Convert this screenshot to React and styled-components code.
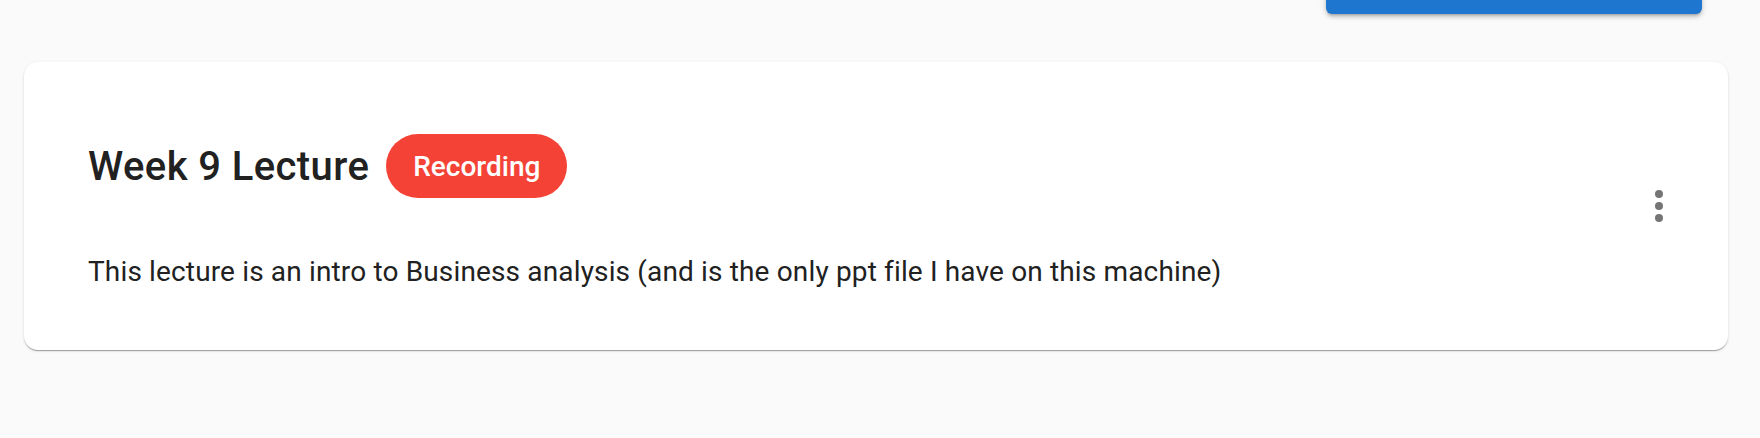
import React from 'react';
import styled, { createGlobalStyle } from 'styled-components';

const GlobalStyle = createGlobalStyle`
  html, body {
    margin: 0;
    padding: 0;
    background: #fafafa;
    font-family: Roboto, "Liberation Sans", Arial, sans-serif;
    overflow: hidden;
  }
`;

const Page = styled.div`
  width: 1760px;
  height: 438px;
  box-sizing: border-box;
  padding: 0 32px 0 24px;
`;

const Toolbar = styled.div`
  display: flex;
  justify-content: flex-end;
  padding-right: 26px;
  margin-top: -42px;
`;

const PrimaryButton = styled.button`
  width: 376px;
  height: 56px;
  border: none;
  border-radius: 6px;
  background: #1e76cf;
  box-shadow: 0 3px 3px -2px rgba(0,0,0,0.2), 0 3px 4px 0 rgba(0,0,0,0.14), 0 1px 8px 0 rgba(0,0,0,0.12);
`;

const Card = styled.div`
  margin-top: 48px;
  height: 288px;
  box-sizing: border-box;
  background: #fff;
  border-radius: 14px;
  box-shadow: 0 2px 1px -1px rgba(0,0,0,0.2), 0 1px 1px 0 rgba(0,0,0,0.14), 0 1px 3px 0 rgba(0,0,0,0.12);
  display: flex;
  align-items: center;
  padding: 0 45px 0 64px;
`;

const Body = styled.div`
  flex: 1;
  display: flex;
  flex-direction: column;
  gap: 57px;
  padding-top: 10px;
`;

const TitleRow = styled.div`
  display: flex;
  align-items: center;
  gap: 17px;
`;

const Title = styled.h2`
  margin: 0;
  font-size: 40px;
  font-weight: 500;
  color: #212121;
  letter-spacing: 0.4px;
`;

const Chip = styled.span`
  display: inline-flex;
  align-items: center;
  height: 64px;
  padding: 0 27px;
  border-radius: 32px;
  background: ${p => p.color || '#f44336'};
  color: #fff;
  font-size: 28px;
  font-weight: 500;
`;

const Description = styled.p`
  margin: 0;
  font-size: 28px;
  color: #212121;
  letter-spacing: 0.15px;
`;

const IconButton = styled.button`
  width: 48px;
  height: 48px;
  padding: 0;
  border: none;
  background: none;
  color: #757575;
  display: flex;
  align-items: center;
  justify-content: center;
`;

const MoreIcon = () => (
  <svg width="48" height="48" viewBox="0 0 24 24" fill="currentColor">
    <circle cx="12" cy="6" r="2" />
    <circle cx="12" cy="12" r="2" />
    <circle cx="12" cy="18" r="2" />
  </svg>
);

const App = () => (
  <Page>
    <GlobalStyle />
    <Toolbar>
      <PrimaryButton />
    </Toolbar>
    <Card>
      <Body>
        <TitleRow>
          <Title>Week 9 Lecture</Title>
          <Chip>Recording</Chip>
        </TitleRow>
        <Description>
          This lecture is an intro to Business analysis (and is the only ppt file I have on this machine)
        </Description>
      </Body>
      <IconButton>
        <MoreIcon />
      </IconButton>
    </Card>
  </Page>
);

export default App;
